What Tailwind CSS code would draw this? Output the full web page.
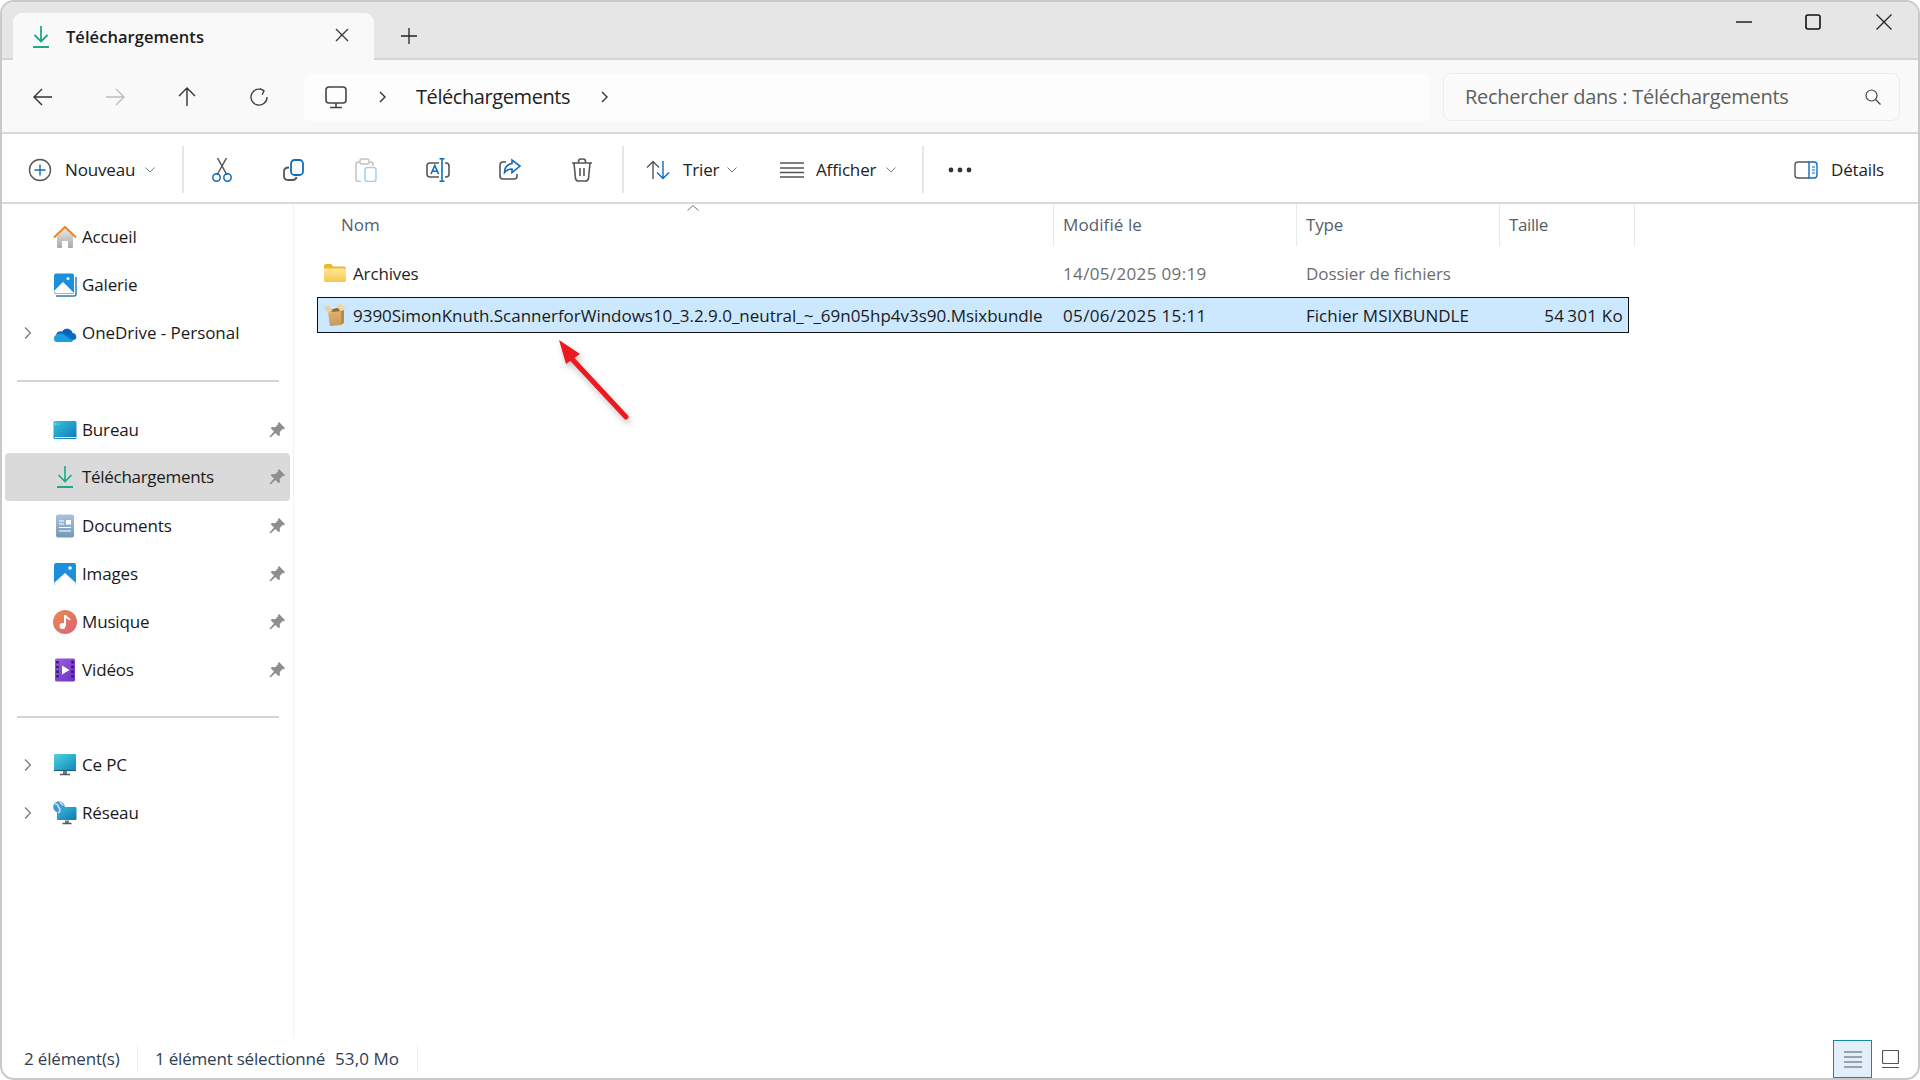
<!DOCTYPE html>
<html lang="fr">
<head>
<meta charset="utf-8">
<title>Téléchargements</title>
<script src="https://cdn.jsdelivr.net/npm/@tailwindcss/browser@4"></script>
</head>
<body class="bg-white">
<div class="relative w-[1920px] h-[1080px] overflow-hidden flex flex-col rounded-[14px] border-2 border-[#c9c9c9] bg-white font-['Open_Sans','Liberation_Sans',sans-serif] text-[#1a1a1a] text-[17px] tracking-[-0.15px]">

  <!-- Tab bar -->
  <div class="flex h-[58px] shrink-0 bg-[#e6e6e6] border-b-2 border-[#d4d4d4] items-end">
    <div class="ml-[11px] w-[361px] h-[47px] -mb-[2px] bg-[#f9f9f9] rounded-t-[9px] flex items-center pl-[18px]">
      <svg class="w-5 h-6 shrink-0" viewBox="0 0 20 24" fill="none" stroke="#1ea887" stroke-width="1.8"><path d="M10 1v15M3.5 10l6.5 6.5L16.500 10"/><path d="M2 22h16" stroke-width="2"/></svg>
      <span class="ml-[15px] mt-[1px] font-semibold text-[#1c1c1c] text-[16.5px] tracking-[0.05px]">Téléchargements</span>
      <svg class="w-[14px] h-[14px] ml-auto mr-[25px] -mt-[4px]" viewBox="0 0 14 14" fill="none" stroke="#333" stroke-width="1.2"><path d="M1 1l12 12M13 1L1 13"/></svg>
    </div>
    <div class="self-center w-[70px] flex justify-center mt-[12px]">
      <svg class="w-4 h-4" viewBox="0 0 16 16" fill="none" stroke="#222" stroke-width="1.3"><path d="M8 0v16M0 8h16"/></svg>
    </div>
    <div class="ml-auto self-start flex items-center h-[40px]">
      <div class="w-[70px] flex justify-center"><svg class="w-4 h-4" viewBox="0 0 16 16" fill="none" stroke="#222" stroke-width="1.3"><path d="M0 8h16"/></svg></div>
      <div class="w-[70px] -ml-[1px] mr-[1px] flex justify-center"><svg class="w-4 h-4" viewBox="0 0 16 16" fill="none" stroke="#111" stroke-width="1.6"><rect x="1" y="1" width="14" height="14" rx="2"/></svg></div>
      <div class="w-[70px] mr-[-1px] flex justify-center"><svg class="w-4 h-4" viewBox="0 0 16 16" fill="none" stroke="#222" stroke-width="1.3"><path d="M.5.5l15 15M15.500.5l-15 15"/></svg></div>
    </div>
  </div>

  <!-- Navigation bar -->
  <div class="flex h-[74px] shrink-0 items-center bg-[#f9f9f9] border-b-2 border-[#d8d8d8] pl-[5px] pt-[2px]">
    <div class="w-[72px] flex justify-center"><svg class="w-5 h-5" viewBox="0 0 20 20" fill="none" stroke="#333" stroke-width="1.4"><path d="M19 10H1M9 2l-8 8 8 8"/></svg></div>
    <div class="w-[72px] flex justify-center"><svg class="w-5 h-5" viewBox="0 0 20 20" fill="none" stroke="#bdbdbd" stroke-width="1.4"><path d="M1 10h18M11 2l8 8-8 8"/></svg></div>
    <div class="w-[72px] flex justify-center"><svg class="w-5 h-5" viewBox="0 0 20 20" fill="none" stroke="#333" stroke-width="1.4"><path d="M10 19V1M2 9l8-8 8 8"/></svg></div>
    <div class="w-[72px] flex justify-center"><svg class="w-5 h-5" viewBox="0 0 20 20" fill="none" stroke="#444" stroke-width="1.4"><path d="M14.500 3.500A8 8 0 1 0 18 10"/><path d="M11 1.500l4 2.200-1.800 4"/></svg></div>
    <div class="ml-[9px] w-[1126px] h-[48px] bg-[#fdfdfd] rounded-[6px] flex items-center pl-[21px]">
      <svg class="w-[22px] h-[23px] shrink-0" viewBox="0 0 22 23" fill="none" stroke="#444" stroke-width="1.6"><rect x="1" y="1" width="20" height="16" rx="3"/><path d="M11 17v4M5 21.500h12"/></svg>
      <svg class="w-2 h-3 ml-[32px] shrink-0" viewBox="0 0 8 12" fill="none" stroke="#333" stroke-width="1.4"><path d="M1 1l5 5-5 5"/></svg>
      <span class="ml-[29px] text-[20px] tracking-[-0.42px] text-[#222] w-[185px]">Téléchargements</span>
      <svg class="w-2 h-3 shrink-0" viewBox="0 0 8 12" fill="none" stroke="#333" stroke-width="1.4"><path d="M1 1l5 5-5 5"/></svg>
    </div>
    <div class="ml-[13px] w-[457px] h-[48px] bg-[#fbfbfb] border border-[#ececec] rounded-[8px] flex items-center pl-[21px]">
      <span class="text-[20px] tracking-[-0.27px] text-[#5f5f5f]">Rechercher dans : Téléchargements</span>
      <svg class="w-4 h-4 ml-auto mr-[18px]" viewBox="0 0 16 16" fill="none" stroke="#444" stroke-width="1.2"><circle cx="6.500" cy="6.500" r="5.500"/><path d="M10.500 10.500l5 5"/></svg>
    </div>
  </div>

  <!-- Toolbar -->
  <div class="flex h-[70px] shrink-0 items-center bg-white border-b-2 border-[#d8d8d8] pl-[26px] pr-[34px] pt-[3px]">
    <div class="flex items-center w-[154px] h-full">
      <svg class="w-6 h-6 shrink-0" viewBox="0 0 24 24" fill="none" stroke-width="1.400"><circle cx="12" cy="12" r="10.500" stroke="#555"/><path d="M12 6.500v11M6.500 12h11" stroke="#0f6cbd"/></svg>
      <span class="ml-[13px] w-[72px] text-[#222]">Nouveau</span>
      <svg class="w-[10px] h-[6px] ml-[8px]" viewBox="0 0 10 6" fill="none" stroke="#777" stroke-width="1"><path d="M.5.500l4.500 4.500L9.500.500"/></svg>
    </div>
    <div class="w-[2px] h-[47px] bg-[#e6e6e6] shrink-0"></div>
    <div class="flex ml-[2px] w-[432px]">
      <div class="w-[72px] flex justify-center"><svg class="w-6 h-6" viewBox="0 0 24 24" fill="none" stroke-width="1.500"><path d="M7 17L16.500 0M17 17L7.500 0" stroke="#555"/><circle cx="6.500" cy="19.500" r="3.700" stroke="#0f6cbd"/><circle cx="17.500" cy="19.500" r="3.700" stroke="#0f6cbd"/></svg></div>
      <div class="w-[72px] flex justify-center -translate-x-[1px]"><svg class="w-6 h-6" viewBox="0 0 24 24" fill="none" stroke-width="1.800"><path d="M8 9.500Q3 9.500 3 13.500V18Q3 22 7 22h4.500Q15 22 15.500 19" stroke="#555"/><rect x="10" y="2" width="12" height="15" rx="3.500" stroke="#0f6cbd"/></svg></div>
      <div class="w-[72px] flex justify-center"><svg class="w-6 h-6" viewBox="0 0 24 24" fill="none" stroke-width="1.500"><path d="M6 4H4Q2 4 2 6.500V21.500Q2 23.500 4 23.500H7M15 4h2Q19 4 19 6.500V8" stroke="#c2c2c2"/><rect x="6" y="1" width="9" height="5" rx="1.500" stroke="#c2c2c2"/><rect x="11" y="9.500" width="11" height="14" rx="2.500" stroke="#a9cbe8"/></svg></div>
      <div class="w-[72px] flex justify-center"><svg class="w-6 h-6" viewBox="0 0 24 24" fill="none" stroke-width="1.600"><path d="M13 5H4Q1 5 1 8v8q0 3 3 3h9M19 5h1q3 0 3 3v8q0 3-3 3h-1" stroke="#555"/><path d="M16 0.500v23M13.500.800h5M13.500 23.200h5" stroke="#0f6cbd"/><path d="M5 16L8.800 7.500 12.500 16M6.300 13.300h5" stroke="#0f6cbd"/></svg></div>
      <div class="w-[72px] flex justify-center"><svg class="w-6 h-6" viewBox="0 0 24 24" fill="none" stroke-width="1.600"><path d="M8 4H5Q2 4 2 7v11q0 3 3 3h11q3 0 3-3v-2" stroke="#555"/><path d="M14 2v3.500C8.500 6.500 6.500 10 6.500 14.500 9 11.500 11 11 14 11v3.500L22 8z" stroke="#0f6cbd"/></svg></div>
      <div class="w-[72px] flex justify-center"><svg class="w-6 h-6" viewBox="0 0 24 24" fill="none" stroke="#555" stroke-width="1.600"><path d="M2 5h20M8.500 5V3.500Q8.500 1 11 1h2q2.500 0 2.500 2.500V5M4 5l1.500 15.500Q6 23 8.500 23h7q2.500 0 3-2.500L20 5M10 10v8M14 10v8"/></svg></div>
    </div>
    <div class="ml-[4px] w-[2px] h-[47px] bg-[#e6e6e6] shrink-0"></div>
    <svg class="w-6 h-[20px] ml-[22px] shrink-0" viewBox="0 0 24 20" fill="none" stroke-width="1.400"><path d="M7 19V1.500M1 7.500l6-6 6 6" stroke="#555"/><path d="M17 1v17.500M11 12.500l6 6 6-6" stroke="#0f6cbd"/></svg>
    <span class="ml-[13px] w-[44px] text-[#222]">Trier</span>
    <svg class="w-[10px] h-[6px] shrink-0" viewBox="0 0 10 6" fill="none" stroke="#777" stroke-width="1"><path d="M.5.500l4.500 4.500L9.500.500"/></svg>
    <svg class="w-6 h-[18px] ml-[43px] shrink-0" viewBox="0 0 24 18" fill="none" stroke="#555" stroke-width="1.400"><path d="M0 2h24M0 7h24M0 11.500h24M0 16h24"/></svg>
    <span class="ml-[12px] w-[70px] text-[#222]">Afficher</span>
    <svg class="w-[10px] h-[6px] shrink-0" viewBox="0 0 10 6" fill="none" stroke="#777" stroke-width="1"><path d="M.5.500l4.500 4.500L9.500.500"/></svg>
    <div class="ml-[26px] w-[2px] h-[47px] bg-[#e6e6e6] shrink-0"></div>
    <svg class="w-6 h-[6px] ml-[24px] shrink-0" viewBox="0 0 24 6" fill="#333"><circle cx="3" cy="3" r="2.400"/><circle cx="12" cy="3" r="2.400"/><circle cx="21" cy="3" r="2.400"/></svg>
    <div class="ml-auto flex items-center">
      <svg class="w-6 h-[18px] shrink-0" viewBox="0 0 24 18" fill="none" stroke-width="1.400"><path d="M15 1H4Q1 1 1 4v10q0 3 3 3h11" stroke="#555"/><path d="M15 1h5q3 0 3 3v10q0 3-3 3h-5z" stroke="#0f6cbd"/><path d="M18 6h3M18 9h3M18 12h3" stroke="#0f6cbd" stroke-width="1.200"/></svg>
      <span class="ml-[13px] text-[#222]">Détails</span>
    </div>
  </div>

  <!-- Body -->
  <div class="flex flex-1 min-h-0">
    <!-- Sidebar -->
    <div class="w-[292px] shrink-0 border-r border-[#f2f2f2] pt-[9px] pl-[3px]">
      <div class="flex items-center h-12 w-[285px]">
        <div class="w-[46px]"></div>
        <svg class="w-6 h-6 shrink-0 ml-[2px]" viewBox="0 0 24 24"><defs><linearGradient id="hb" x1="0" y1="0" x2="0" y2="1"><stop offset="0" stop-color="#e6e6e6"/><stop offset="1" stop-color="#a8a8a8"/></linearGradient></defs><path d="M4 11l8-7 8 7v11q0 1-1 1h-4v-7H9v7H5q-1 0-1-1z" fill="url(#hb)"/><path d="M1 12.500L12 2l11 10.500" fill="none" stroke="#e8872b" stroke-width="2.200"/></svg>
        <span class="ml-[5px]">Accueil</span>
      </div>
      <div class="flex items-center h-12 w-[285px]">
        <div class="w-[46px]"></div>
        <svg class="w-6 h-6 shrink-0 ml-[2px]" viewBox="0 0 24 24"><path d="M3 23h18q2 0 2-2V4" fill="none" stroke="#2b7fb8" stroke-width="1.500"/><rect x="1" y="0.500" width="20" height="20" rx="2" fill="#1e8fdc"/><path d="M1 18l9-9 11 11H3q-2 0-2-2z" fill="#ffffff"/><circle cx="15" cy="5.500" r="1.500" fill="#fff"/><path d="M1 20.500h20" stroke="#7cc4ef" stroke-width="1"/></svg>
        <span class="ml-[5px]">Galerie</span>
      </div>
      <div class="flex items-center h-12 w-[285px]">
        <svg class="w-2 h-[12px] ml-[19px] mr-[19px] shrink-0" viewBox="0 0 8 12" fill="none" stroke="#777" stroke-width="1.200"><path d="M1 .5l5.500 5.500L1 11.500"/></svg>
        <svg class="w-6 h-6 shrink-0 ml-[2px]" viewBox="0 0 24 24"><path d="M7 19h13c5 0 4-7-.5-7-1-5-8-6-10-1.500C5 9.500 3 12 3.500 14z" fill="#0f6cbd"/><path d="M1 18c0-3 2-5 5-5 2-1 5 0 7 2l7 4.500c-.5 1-1 1.500-2.500 1.500H4c-2 0-3-1-3-3z" fill="#1b9de2"/><path d="M9.500 10.500C11.500 6 17.500 7 19.500 12c-2 0-3.500.5-5.500 2.500C12.500 12.500 11 11 9.500 10.500z" fill="#0364b8"/></svg>
        <span class="ml-[5px] tracking-[-0.05px]">OneDrive - Personal</span>
      </div>
      <div class="h-[2px] bg-[#d4d4d4] ml-[12px] w-[262px] mt-[23px] mb-[24px]"></div>
      <div class="flex items-center h-12 w-[285px]">
        <div class="w-[46px]"></div>
        <svg class="w-6 h-6 shrink-0 ml-[2px]" viewBox="0 0 24 24"><defs><linearGradient id="db" x1="0" y1="0" x2="1" y2="1"><stop offset="0" stop-color="#35c4dc"/><stop offset="1" stop-color="#0f78b8"/></linearGradient></defs><rect x="0.500" y="3" width="23" height="18" rx="1.500" fill="url(#db)"/><path d="M2 6h1M4.500 6h1M2 19.500h21" stroke="#dff" stroke-width="1"/></svg>
        <span class="ml-[5px]">Bureau</span>
        <svg class="w-4 h-4 ml-auto mr-[5px]" viewBox="0 0 16 16" fill="#8b8f92"><path d="M10 0l6 6-1.300 1.200-1-.3-3 3 .3 3.100-1.300 1.300-3.300-3.300L1.500 15.500.5 14.500l4.500-4.900L1.700 6.300 3 5l3.100.3 3-3-.3-1z"/></svg>
      </div>
      <div class="flex items-center h-12 w-[285px] bg-[#dadada] rounded-[4px] -mt-[1px]">
        <div class="w-[46px]"></div>
        <svg class="w-5 h-6 shrink-0 ml-[4px]" viewBox="0 0 20 24" fill="none" stroke="#1ea887" stroke-width="1.600"><path d="M10 1v15M3.5 10l6.500 6.500L16.500 10"/><path d="M2 22h16" stroke-width="2"/></svg>
        <span class="ml-[7px] tracking-[-0.3px]">Téléchargements</span>
        <svg class="w-4 h-4 ml-auto mr-[5px]" viewBox="0 0 16 16" fill="#8b8f92"><path d="M10 0l6 6-1.300 1.200-1-.3-3 3 .3 3.100-1.300 1.300-3.300-3.300L1.500 15.500.5 14.500l4.500-4.900L1.700 6.300 3 5l3.100.3 3-3-.3-1z"/></svg>
      </div>
      <div class="flex items-center h-12 w-[285px] mt-[1px]">
        <div class="w-[46px]"></div>
        <svg class="w-6 h-6 shrink-0 ml-[2px]" viewBox="0 0 24 24"><defs><linearGradient id="dc" x1="0" y1="0" x2="0" y2="1"><stop offset="0" stop-color="#a9c4dc"/><stop offset="1" stop-color="#7397b8"/></linearGradient></defs><rect x="3" y="0.500" width="18" height="23" rx="2" fill="url(#dc)"/><path d="M6 7h5M6 10h5M6 13.500h12M6 17h12" stroke="#fff" stroke-width="1.200"/><rect x="13" y="6" width="5" height="4.500" fill="#fff"/></svg>
        <span class="ml-[5px]">Documents</span>
        <svg class="w-4 h-4 ml-auto mr-[5px]" viewBox="0 0 16 16" fill="#8b8f92"><path d="M10 0l6 6-1.300 1.200-1-.3-3 3 .3 3.100-1.300 1.300-3.300-3.300L1.500 15.500.5 14.500l4.500-4.900L1.700 6.300 3 5l3.100.3 3-3-.3-1z"/></svg>
      </div>
      <div class="flex items-center h-12 w-[285px]">
        <div class="w-[46px]"></div>
        <svg class="w-6 h-6 shrink-0 ml-[2px]" viewBox="0 0 24 24"><rect x="1" y="1" width="22" height="22" rx="2" fill="#1e8fdc"/><path d="M1 21l11-10 11 10q0 2-2 2H3q-2 0-2-2z" fill="#fff"/><circle cx="17" cy="6" r="1.800" fill="#fff"/></svg>
        <span class="ml-[5px]">Images</span>
        <svg class="w-4 h-4 ml-auto mr-[5px]" viewBox="0 0 16 16" fill="#8b8f92"><path d="M10 0l6 6-1.300 1.200-1-.3-3 3 .3 3.100-1.300 1.300-3.300-3.300L1.500 15.500.5 14.500l4.500-4.900L1.700 6.300 3 5l3.100.3 3-3-.3-1z"/></svg>
      </div>
      <div class="flex items-center h-12 w-[285px]">
        <div class="w-[46px]"></div>
        <svg class="w-6 h-6 shrink-0 ml-[2px]" viewBox="0 0 24 24"><defs><linearGradient id="mu" x1="0" y1="0" x2="1" y2="1"><stop offset="0" stop-color="#ea8a4a"/><stop offset="1" stop-color="#d9627e"/></linearGradient></defs><circle cx="12" cy="12" r="12" fill="url(#mu)"/><path d="M12 5v10.500" stroke="#fff" stroke-width="2"/><path d="M12 5c1 3 4 3 5 5" fill="none" stroke="#fff" stroke-width="1.800"/><circle cx="9.500" cy="16" r="3" fill="#fff"/></svg>
        <span class="ml-[5px]">Musique</span>
        <svg class="w-4 h-4 ml-auto mr-[5px]" viewBox="0 0 16 16" fill="#8b8f92"><path d="M10 0l6 6-1.300 1.200-1-.3-3 3 .3 3.100-1.300 1.300-3.300-3.300L1.500 15.500.5 14.500l4.500-4.900L1.700 6.300 3 5l3.100.3 3-3-.3-1z"/></svg>
      </div>
      <div class="flex items-center h-12 w-[285px]">
        <div class="w-[46px]"></div>
        <svg class="w-6 h-6 shrink-0 ml-[2px]" viewBox="0 0 24 24"><defs><linearGradient id="vi" x1="0" y1="0" x2="1" y2="1"><stop offset="0" stop-color="#a05ce0"/><stop offset="1" stop-color="#6a32c4"/></linearGradient></defs><rect x="2" y="0.500" width="20" height="23" rx="1.500" fill="url(#vi)"/><path d="M4.500 3v18M19.500 3v18" stroke="#2e1a70" stroke-width="2.500" stroke-dasharray="2.500 2.200"/><path d="M9 7.500v9l7.500-4.500z" fill="#fff"/></svg>
        <span class="ml-[5px]">Vidéos</span>
        <svg class="w-4 h-4 ml-auto mr-[5px]" viewBox="0 0 16 16" fill="#8b8f92"><path d="M10 0l6 6-1.300 1.200-1-.3-3 3 .3 3.100-1.300 1.300-3.300-3.300L1.500 15.500.5 14.500l4.500-4.900L1.700 6.300 3 5l3.100.3 3-3-.3-1z"/></svg>
      </div>
      <div class="h-[2px] bg-[#d4d4d4] ml-[12px] w-[262px] mt-[22px] mb-[23px]"></div>
      <div class="flex items-center h-12 w-[285px]">
        <svg class="w-2 h-[12px] ml-[19px] mr-[19px] shrink-0" viewBox="0 0 8 12" fill="none" stroke="#777" stroke-width="1.200"><path d="M1 .5l5.500 5.500L1 11.500"/></svg>
        <svg class="w-6 h-6 shrink-0 ml-[2px]" viewBox="0 0 24 24"><defs><linearGradient id="pc" x1="0" y1="0" x2="1" y2="1"><stop offset="0" stop-color="#4fd3dc"/><stop offset="1" stop-color="#0f88c0"/></linearGradient></defs><rect x="1" y="1" width="22" height="16.500" rx="1" fill="url(#pc)"/><path d="M1 17.500h22" stroke="#2a5f78" stroke-width="1.200"/><path d="M10 18h4v3h-4z" fill="#6c7a82"/><path d="M7 21.500h10" stroke="#556" stroke-width="1.500"/></svg>
        <span class="ml-[5px]">Ce PC</span>
      </div>
      <div class="flex items-center h-12 w-[285px]">
        <svg class="w-2 h-[12px] ml-[19px] mr-[19px] shrink-0" viewBox="0 0 8 12" fill="none" stroke="#777" stroke-width="1.200"><path d="M1 .5l5.500 5.500L1 11.500"/></svg>
        <svg class="w-6 h-6 shrink-0 ml-[2px]" viewBox="0 0 24 24"><defs><linearGradient id="ne" x1="0" y1="0" x2="1" y2="1"><stop offset="0" stop-color="#38bcd8"/><stop offset="1" stop-color="#0f78b0"/></linearGradient></defs><rect x="4" y="6" width="19.500" height="13" rx="1" fill="url(#ne)"/><path d="M12 19.500h4v2.500h-4z" fill="#6c7a82"/><path d="M9.500 22.500h9" stroke="#556" stroke-width="1.500"/><circle cx="6" cy="6" r="5.800" fill="#3f9ad8"/><path d="M2 3c2 0 3 1 3 2s2 2 2 4-1 2-2 3M7 0.500c0 2 2 2 3 4" fill="none" stroke="#cfe8f7" stroke-width="1.500"/></svg>
        <span class="ml-[5px]">Réseau</span>
      </div>
    </div>

    <!-- File list -->
    <div class="relative flex-1 min-w-0">
      <div class="flex h-[42px] text-[#56606c] items-stretch">
        <div class="relative w-[759px] pl-[47px] flex items-center tracking-[0px]">Nom
          <svg class="absolute left-[393px] top-[1px] w-3 h-[6px]" viewBox="0 0 12 6" fill="none" stroke="#777" stroke-width="1"><path d="M.5 5.500L6 .5l5.500 5"/></svg>
        </div>
        <div class="w-[243px] pl-[9px] flex items-center border-l border-[#e8e8e8] tracking-[0.1px]">Modifié le</div>
        <div class="w-[203px] pl-[9px] flex items-center border-l border-[#e8e8e8]">Type</div>
        <div class="w-[136px] pl-[9px] flex items-center border-l border-r border-[#e8e8e8] tracking-[-0.4px]">Taille</div>
      </div>
      <div class="mt-[10px] ml-[23px] w-[1312px]">
        <div class="flex items-center h-[36px] pl-[7px]">
          <svg class="w-[22px] h-[18px] shrink-0 -mt-[3px]" viewBox="0 0 22 18"><defs><linearGradient id="fo" x1="0" y1="0" x2="0" y2="1"><stop offset="0" stop-color="#ffe79a"/><stop offset="1" stop-color="#f6c94d"/></linearGradient></defs><path d="M0 2q0-2 2-2h5l2.500 2.500H20q2 0 2 2V6H0z" fill="#eeb82e"/><path d="M0 4.500h22V16.500q0 1.500-1.500 1.500h-19Q0 18 0 16.500z" fill="url(#fo)"/></svg>
          <span class="ml-[7px] w-[710px] text-[#1f1f1f]">Archives</span>
          <span class="w-[243px] text-[#6d6d6d] tracking-[0.35px]">14/05/2025 09:19</span>
          <span class="text-[#6d6d6d] tracking-[-0.05px]">Dossier de fichiers</span>
        </div>
        <div class="flex items-center h-[36px] mt-[5px] pl-[6px] pr-[5px] pt-[2px] bg-[#cce8ff] border border-[#111]">
          <svg class="w-[22px] h-[22px] shrink-0 -mt-[2px]" viewBox="0 0 22 22"><defs><linearGradient id="bx" x1="0" y1="0" x2="0" y2="1"><stop offset="0" stop-color="#e0b26c"/><stop offset="1" stop-color="#c8985a"/></linearGradient></defs><path d="M5 6l12-3v5H5z" fill="#8e6a3a"/><path d="M4 8.500l13-1.500v14L6 22z" fill="url(#bx)"/><path d="M17 7l3-1v13l-3 2z" fill="#b98a48"/><path d="M4 8.500L0 3l4.500-1.500L9 7z" fill="#eccd97"/><path d="M16 7L12 1l5-1 5 4.500z" fill="#f0d6a6"/></svg>
          <span class="ml-[7px] w-[710px] whitespace-nowrap tracking-[-0.02px]">9390SimonKnuth.ScannerforWindows10_3.2.9.0_neutral_~_69n05hp4v3s90.Msixbundle</span>
          <span class="w-[243px] tracking-[0.35px]">05/06/2025 15:11</span>
          <span class="tracking-[0px]">Fichier MSIXBUNDLE</span>
          <span class="ml-auto tracking-[0.25px]">54<span class="ml-[3px]">301 Ko</span></span>
        </div>
      </div>
      <svg class="absolute left-[240px] top-[121px] w-[100px] h-[110px] drop-shadow-[2px_4px_3px_rgba(0,0,0,0.25)]" viewBox="0 0 100 110"><path d="M38 34L92 92" stroke="#ea1a1f" stroke-width="5" stroke-linecap="round" fill="none"/><path d="M25 15L32 39 46 29z" fill="#ea1a1f"/></svg>
    </div>
  </div>

  <!-- Status bar -->
  <div class="flex h-[40px] shrink-0 items-center pl-[22px] text-[#2f4054] pt-[2px]">
    <span class="w-[113px]">2 élément(s)</span>
    <div class="w-[1px] h-[28px] bg-[#ededed]"></div>
    <span class="ml-[17px] w-[180px] tracking-[-0.2px]">1 élément sélectionné</span>
    <span class="tracking-[0.1px]">53,0 Mo</span>
    <div class="ml-[18px] w-[1px] h-[28px] bg-[#ededed]"></div>
    <div class="ml-auto flex items-center mr-[19px]">
      <div class="w-[39px] h-[38px] bg-[#e3eefb] border border-[#1a86a8] flex items-center justify-center">
        <svg class="w-[18px] h-[17px]" viewBox="0 0 18 17" fill="none" stroke="#555" stroke-width="1.200"><path d="M0 1h18M0 6h18M0 11h18M0 16h18"/></svg>
      </div>
      <svg class="ml-[10px] w-[17px] h-[18px]" viewBox="0 0 17 18" fill="none" stroke="#555" stroke-width="1.200"><rect x="0.500" y="0.500" width="16" height="13" rx="1"/><path d="M0 17.500h17"/></svg>
    </div>
  </div>
</div>
</body>
</html>
